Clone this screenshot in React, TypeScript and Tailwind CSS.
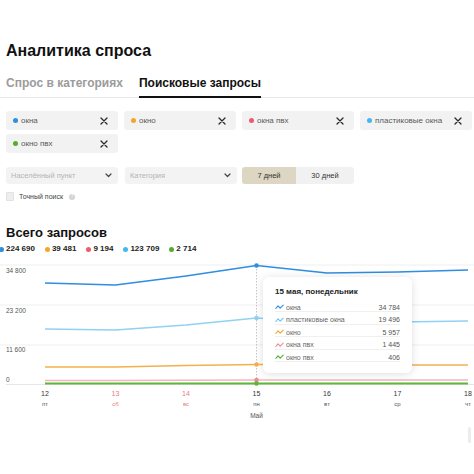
import React from "react";

const tags = [
  { name: "окна", color: "#2f8ee0" },
  { name: "окно", color: "#f5a52a" },
  { name: "окна пвх", color: "#ef5a6c" },
  { name: "пластиковые окна", color: "#45b6f0" },
  { name: "окно пвх", color: "#52ad2f" },
];

const legend = [
  { v: "224 690", color: "#2f8ee0" },
  { v: "39 481", color: "#f5a52a" },
  { v: "9 194", color: "#ef5a6c" },
  { v: "123 709", color: "#45b6f0" },
  { v: "2 714", color: "#52ad2f" },
];

const xs = [45, 115.5, 186, 256.5, 327, 397.5, 468];

const series = [
  { color: "#2f8ee0", w: 1.6, ys: [283, 285, 276, 265.5, 273, 272, 270] },
  { color: "#8fd2f2", w: 1.3, ys: [329, 330, 325, 318, 322, 322, 321] },
  { color: "#f5b04a", w: 1.3, ys: [367, 367, 365.5, 364.5, 364.5, 365, 365] },
  { color: "#f3b5bd", w: 1.5, ys: [380.5, 380.5, 380.3, 380, 380, 380, 380] },
  { color: "#5cb83a", w: 2, ys: [383.5, 383.5, 383.5, 383.5, 383.5, 383.5, 383.5] },
];

const days = [
  { d: "12", w: "пт", red: false },
  { d: "13", w: "сб", red: true },
  { d: "14", w: "вс", red: true },
  { d: "15", w: "пн", red: false },
  { d: "16", w: "вт", red: false },
  { d: "17", w: "ср", red: false },
  { d: "18", w: "чт", red: false },
];

const tipRows = [
  { n: "окна", v: "34 784", color: "#2f8ee0" },
  { n: "пластиковые окна", v: "19 496", color: "#6cc6f2" },
  { n: "окно", v: "5 957", color: "#f5a52a" },
  { n: "окна пвх", v: "1 445", color: "#f08a98" },
  { n: "окно пвх", v: "406", color: "#52ad2f" },
];

function XIcon() {
  return (
    <svg width="8" height="8" viewBox="0 0 8 8">
      <path d="M1 1 L7 7 M7 1 L1 7" stroke="#2a2a2a" strokeWidth="1.3" strokeLinecap="round" />
    </svg>
  );
}

function Chevron() {
  return (
    <svg width="7" height="5" viewBox="0 0 7 5">
      <path d="M1 1 L3.5 3.5 L6 1" stroke="#444" strokeWidth="1.2" fill="none" strokeLinecap="round" strokeLinejoin="round" />
    </svg>
  );
}

function Wave({ color }: { color: string }) {
  return (
    <svg width="9" height="6" viewBox="0 0 9 6" className="mr-[2px] shrink-0">
      <path d="M0.8 4.5 L3 1.8 L5.2 4.2 L8.2 1.2" stroke={color} strokeWidth="1.1" fill="none" strokeLinecap="round" strokeLinejoin="round" />
    </svg>
  );
}

export default function App() {
  return (
    <div className="relative w-[474px] h-[474px] overflow-hidden bg-white font-['Liberation_Sans',Arial,sans-serif]">
      <div className="pl-[6px] pt-[41px]">
        <h1 className="text-[16px] leading-[20px] font-bold text-[#111]">Аналитика спроса</h1>

        <div className="mt-[14px] -ml-[6px] pl-[6px] flex border-b border-[#e8e8e8]">
          <div className="text-[12px] leading-[16px] font-bold text-[#9b9b9b]">Спрос в категориях</div>
          <div className="ml-[16px] text-[12px] leading-[16px] font-bold text-[#111] pb-[5px] border-b-2 border-[#111] -mb-px">
            Поисковые запросы
          </div>
        </div>

        <div className="mt-[13px] grid grid-cols-[112px_112px_112px_112px] gap-x-[6px] gap-y-[4px]">
          {tags.map((t) => (
            <div key={t.name} className="h-[19px] rounded-[3px] bg-[#f2f2f2] flex items-center pl-[7px] pr-[10px]">
              <span className="w-[5px] h-[5px] rounded-full mr-[3px]" style={{ backgroundColor: t.color }} />
              <span className="text-[8px] leading-[10px] text-[#5a5a5a]">{t.name}</span>
              <span className="ml-auto flex">
                <XIcon />
              </span>
            </div>
          ))}
        </div>

        <div className="mt-[14px] flex items-center">
          <div className="w-[112px] h-[17px] rounded-[3px] bg-[#f3f3f3] flex items-center pl-[5px] pr-[6px]">
            <span className="text-[7.5px] text-[#b5b5b5]">Населённый пункт</span>
            <span className="ml-auto flex"><Chevron /></span>
          </div>
          <div className="ml-[7px] w-[112px] h-[17px] rounded-[3px] bg-[#f3f3f3] flex items-center pl-[5px] pr-[6px]">
            <span className="text-[7.5px] text-[#b5b5b5]">Категория</span>
            <span className="ml-auto flex"><Chevron /></span>
          </div>
          <div className="ml-[5px] flex h-[17px] rounded-[3px] overflow-hidden">
            <div className="w-[54px] bg-[#ddd6c3] flex items-center justify-center text-[7.5px] text-[#333]">7 дней</div>
            <div className="w-[58px] bg-[#f1f1f1] flex items-center justify-center text-[7.5px] text-[#333]">30 дней</div>
          </div>
        </div>

        <div className="mt-[8px] flex items-center h-[9px]">
          <span className="w-[8px] h-[9px] bg-[#eeeeee] border border-[#e2e2e2] rounded-[1px]" />
          <span className="ml-[5px] text-[7px] leading-[9px] text-[#444]">Точный поиск</span>
          <span className="ml-[6px] w-[6px] h-[6px] rounded-full bg-[#d4d4d4] flex items-center justify-center text-[4.5px] text-white font-bold">?</span>
        </div>

        <h2 className="mt-[24px] text-[13px] leading-[16px] font-bold text-[#111]">Всего запросов</h2>

        <div className="mt-[3px] -ml-[7px] flex items-center gap-x-[10px] h-[10px]">
          {legend.map((l) => (
            <div key={l.v} className="flex items-center">
              <span className="w-[5px] h-[5px] rounded-full mr-[2px]" style={{ backgroundColor: l.color }} />
              <span className="text-[8px] leading-[10px] font-bold text-[#222]">{l.v}</span>
            </div>
          ))}
        </div>

        <div className="mt-[4px] -ml-[6px]">
          <svg width="474" height="170" viewBox="0 258 474 170" className="block">
            {[265, 305, 345].map((y) => (
              <line key={y} x1="0" x2="474" y1={y} y2={y} stroke="#efefef" strokeWidth="1" />
            ))}
            <line x1="6" x2="474" y1="384.5" y2="384.5" stroke="#e6e6e6" strokeWidth="1" />
            <text x="6" y="272.5" fontSize="6.5" fill="#555">34 800</text>
            <text x="6" y="312.5" fontSize="6.5" fill="#555">23 200</text>
            <text x="6" y="352" fontSize="6.5" fill="#555">11 600</text>
            <text x="6" y="382" fontSize="6.5" fill="#555">0</text>

            <line x1="256.5" x2="256.5" y1="266" y2="385" stroke="#b8b8b8" strokeWidth="0.8" strokeDasharray="1.5 1.5" />

            {series.map((s, i) => (
              <polyline
                key={i}
                points={s.ys.map((y, j) => `${xs[j]},${y}`).join(" ")}
                fill="none"
                stroke={s.color}
                strokeWidth={s.w}
                strokeLinejoin="round"
              />
            ))}
            {series.map((s, i) => (
              <circle key={i} cx="256.5" cy={s.ys[3]} r="2.3" fill={i === 1 ? "#8fd2f2" : i === 3 ? "#f08a98" : s.color} />
            ))}

            {days.map((d, i) => (
              <g key={d.d}>
                <text x={xs[i]} y="396" fontSize="7" textAnchor="middle" fill={d.red ? "#e77b86" : "#333"}>{d.d}</text>
                <text x={xs[i]} y="406" fontSize="6" textAnchor="middle" fill={d.red ? "#e77b86" : "#555"}>{d.w}</text>
              </g>
            ))}
            <text x="256.5" y="418" fontSize="6.5" textAnchor="middle" fill="#555">Май</text>
          </svg>
        </div>
      </div>

      <div className="absolute left-[263px] top-[277px] w-[149px] h-[96px] bg-white rounded-[6px] shadow-[0_1px_8px_rgba(0,0,0,0.13)] pl-[12px] pr-[12px] pt-[10px]">
        <div className="text-[8px] leading-[10px] font-bold text-[#222]">15 мая, понедельник</div>
        <div className="mt-[6px]">
          {tipRows.map((r) => (
            <div key={r.n} className="flex items-center h-[9px] mb-[3.6px] border-b border-[#f0f0f0]">
              <Wave color={r.color} />
              <span className="text-[7px] leading-[9px] text-[#666]">{r.n}</span>
              <span className="ml-auto text-[7px] leading-[9px] text-[#555]">{r.v}</span>
            </div>
          ))}
        </div>
      </div>

      <div className="absolute left-[468px] top-[427px] w-[3px] h-[16px] rounded-full bg-[#ececec]" />
    </div>
  );
}
